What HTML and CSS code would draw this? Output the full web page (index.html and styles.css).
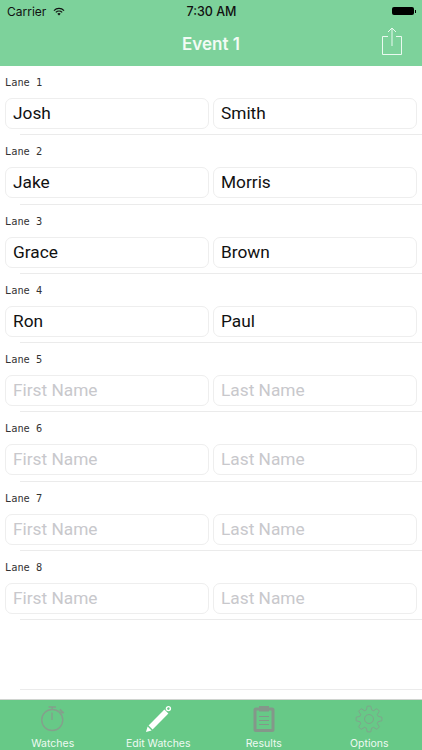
FILE: index.html
```html
<!DOCTYPE html>
<html lang="en">
  <head>
    <meta charset="UTF-8" />
    <meta name="viewport" content="width=device-width, initial-scale=1.0" />
    <title>Edit Watches</title>
    <link rel="stylesheet" href="styles.css">
  </head>
  <body>
    <div class="app">
      <header class="top">
        <div class="status">
          <div class="status-left">
            <span>Carrier</span>
            <svg class="wifi" width="12" height="9" viewBox="0 0 14 10">
              <path d="M0.6 3.4a9 9 0 0 1 12.8 0l-1 1a7.6 7.6 0 0 0-10.8 0z" fill="#111" />
              <path d="M2.8 5.6a6 6 0 0 1 8.4 0l-1 1a4.6 4.6 0 0 0-6.4 0z" fill="#111" />
              <path d="M5 7.7a2.9 2.9 0 0 1 4 0L7 9.8z" fill="#111" />
            </svg>
          </div>
          <div class="status-time">7:30 AM</div>
          <div class="status-right">
            <span class="battery"></span><span class="battery-tip"></span>
          </div>
        </div>
        <div class="navbar">
          <h1 class="title">Event 1</h1>
          <svg class="share" width="22" height="29" viewBox="0 0 22 29" fill="none" stroke="#eafaf0" stroke-width="1">
            <path d="M7 9.5H1.5v18h19v-18H15" />
            <path d="M11 19V1M7 5l4-4 4 4" />
          </svg>
        </div>
      </header>

      <main class="lanes">
        <section class="lane">
          <div class="lane-label">Lane 1</div>
          <div class="fields">
            <div class="field">Josh</div>
            <div class="field">Smith</div>
          </div>
        </section>
        <section class="lane">
          <div class="lane-label">Lane 2</div>
          <div class="fields">
            <div class="field">Jake</div>
            <div class="field">Morris</div>
          </div>
        </section>
        <section class="lane">
          <div class="lane-label">Lane 3</div>
          <div class="fields">
            <div class="field">Grace</div>
            <div class="field">Brown</div>
          </div>
        </section>
        <section class="lane">
          <div class="lane-label">Lane 4</div>
          <div class="fields">
            <div class="field">Ron</div>
            <div class="field">Paul</div>
          </div>
        </section>
        <section class="lane">
          <div class="lane-label">Lane 5</div>
          <div class="fields">
            <div class="field empty">First Name</div>
            <div class="field empty">Last Name</div>
          </div>
        </section>
        <section class="lane">
          <div class="lane-label">Lane 6</div>
          <div class="fields">
            <div class="field empty">First Name</div>
            <div class="field empty">Last Name</div>
          </div>
        </section>
        <section class="lane">
          <div class="lane-label">Lane 7</div>
          <div class="fields">
            <div class="field empty">First Name</div>
            <div class="field empty">Last Name</div>
          </div>
        </section>
        <section class="lane">
          <div class="lane-label">Lane 8</div>
          <div class="fields">
            <div class="field empty">First Name</div>
            <div class="field empty">Last Name</div>
          </div>
        </section>
        <section class="lane"></section>
      </main>

      <nav class="tabs">
        <div class="tab">
          <svg width="28" height="28" viewBox="0 0 28 28" fill="none" stroke="#84a08c" stroke-width="1.4">
            <circle cx="13.25" cy="15" r="10.5" />
            <path d="M13 7.5V15M9.5 2H17M13.2 2v3" />
            <path d="M21 9l2.2-2.4" />
            <path d="M21.5 3.8l3.8 3.8-1.4 1.4-3.8-3.8z" fill="#84a08c" stroke="none" />
          </svg>
          <span>Watches</span>
        </div>
        <div class="tab">
          <svg width="28" height="28" viewBox="0 0 28 28" fill="#fff">
            <path d="M2 27l1.6-5.6 4 4z" />
            <path d="M4.6 20.4L20.4 4.6l4 4L8.6 24.4z" />
            <circle cx="24.4" cy="3.6" r="2" fill="none" stroke="#fff" stroke-width="1.4" />
          </svg>
          <span>Edit Watches</span>
        </div>
        <div class="tab">
          <svg width="24" height="28" viewBox="0 0 24 28" fill="none" stroke="#84978a">
            <rect x="3" y="4" width="18" height="21.5" rx="1" stroke-width="3" />
            <rect x="7" y="1" width="10" height="5.5" fill="#84978a" stroke="none" />
            <path d="M7 11.5h10M7 15.5h10M7 19.5h10" stroke="#84978a" stroke-width="1" />
          </svg>
          <span>Results</span>
        </div>
        <div class="tab">
          <svg width="28" height="28" viewBox="-14 -14 28 28" fill="none" stroke="#7fa58b" stroke-width="1">
            <circle r="4.5" />
            <polygon points="12.87,1.81 9.13,2.62 8.31,4.61 10.38,7.82 7.82,10.38 4.61,8.31 2.62,9.13 1.81,12.87 -1.81,12.87 -2.62,9.13 -4.61,8.31 -7.82,10.38 -10.38,7.82 -8.31,4.61 -9.13,2.62 -12.87,1.81 -12.87,-1.81 -9.13,-2.62 -8.31,-4.61 -10.38,-7.82 -7.82,-10.38 -4.61,-8.31 -2.62,-9.13 -1.81,-12.87 1.81,-12.87 2.62,-9.13 4.61,-8.31 7.82,-10.38 10.38,-7.82 8.31,-4.61 9.13,-2.62 12.87,-1.81" />
          </svg>
          <span>Options</span>
        </div>
      </nav>
    </div>
  </body>
</html>
```

FILE: styles.css
```css
html,
body {
  margin: 0;
  padding: 0;
}
body {
  width: 422px;
  height: 750px;
  overflow: hidden;
  background: #fff;
  font-family: "Inter", "Liberation Sans", sans-serif;
}
.app {
  display: flex;
  flex-direction: column;
  height: 750px;
}

/* header */
.top {
  height: 66px;
  background: #7dd29b;
}
.status {
  display: flex;
  align-items: center;
  justify-content: space-between;
  height: 22px;
  padding: 0 6px 0 7px;
  font-size: 12px;
  color: #111;
}
.status-left {
  display: flex;
  align-items: center;
  gap: 7px;
  flex: 1;
}
.status-time {
  font-weight: 500;
  font-size: 12.5px;
}
.status-right {
  display: flex;
  align-items: center;
  justify-content: flex-end;
  flex: 1;
}
.battery {
  width: 22px;
  height: 8px;
  background: #000;
  border-radius: 2px;
}
.battery-tip {
  width: 1px;
  height: 3px;
  margin-left: 1px;
  background: #000;
}
.navbar {
  display: flex;
  align-items: center;
  justify-content: center;
  position: relative;
  height: 44px;
}
.title {
  margin: 0;
  font-size: 17px;
  font-weight: 600;
  color: #f2fbf5;
}
.share {
  position: absolute;
  right: 19px;
  top: 5px;
}

/* lanes */
.lanes {
  flex: 1;
}
.lane {
  box-sizing: border-box;
  height: 69.3px;
  padding: 10px 5px 0;
  position: relative;
}
.lane::after {
  content: "";
  position: absolute;
  left: 20px;
  right: 0;
  bottom: 0;
  height: 1px;
  background: #ebebeb;
}
.lane-label {
  height: 13px;
  margin-bottom: 9px;
  font-family: "DejaVu Sans Mono", monospace;
  font-size: 10.3px;
  line-height: 12px;
  color: #333;
}
.fields {
  display: grid;
  grid-template-columns: 204px 204px;
  gap: 4px;
}
.field {
  box-sizing: border-box;
  height: 31px;
  padding-left: 7px;
  border: 1px solid #eeeeee;
  border-radius: 7px;
  font-family: "Roboto", "Liberation Sans", sans-serif;
  font-size: 17.3px;
  line-height: 29px;
  color: #111;
}
.empty {
  color: #c8c8cc;
}

/* tab bar */
.tabs {
  box-sizing: border-box;
  display: grid;
  grid-template-columns: repeat(4, 1fr);
  height: 51px;
  background: #67c987;
  border-top: 1px solid #d0d4d0;
}
.tab {
  display: flex;
  flex-direction: column;
  align-items: center;
  padding-top: 5px;
  height: 45px;
  font-size: 10.5px;
  color: #eef9f2;
}
.tab svg {
  flex: none;
  margin-bottom: 4px;
}
```
